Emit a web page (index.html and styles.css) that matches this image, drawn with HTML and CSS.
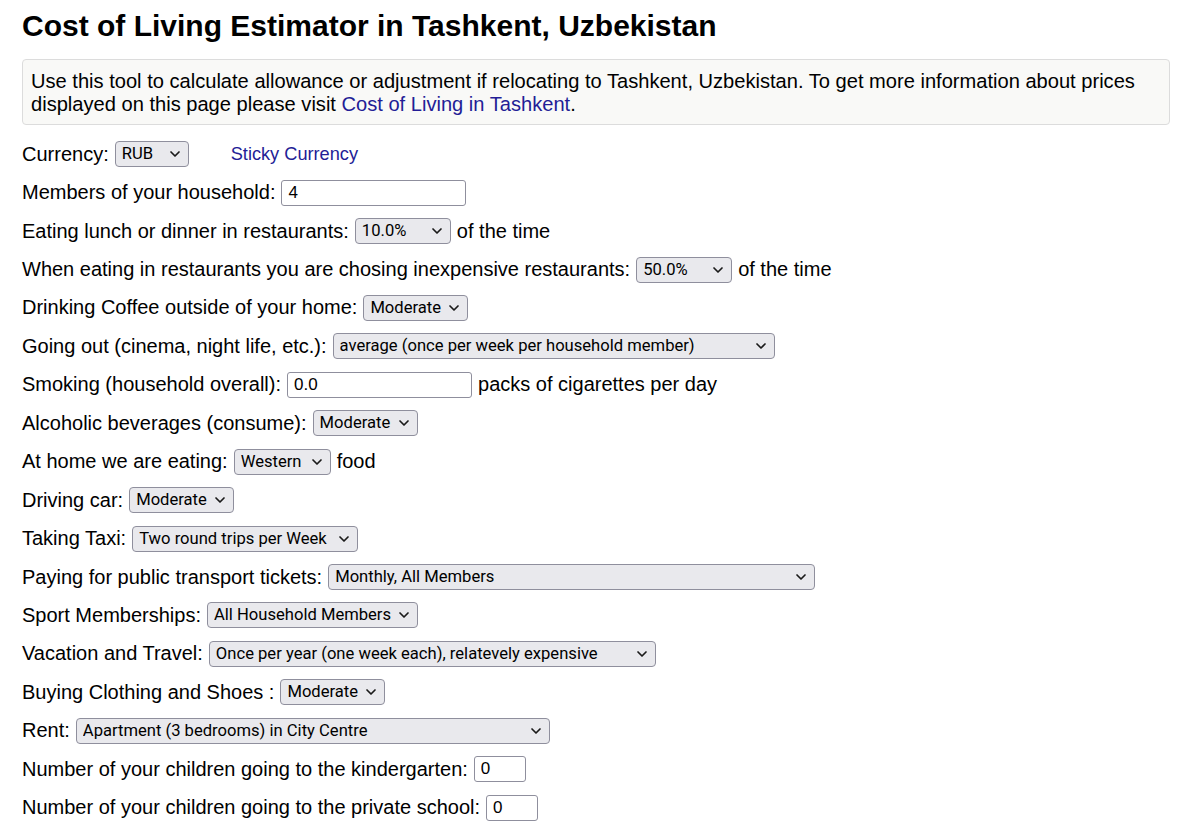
FILE: index.html
```html
<!DOCTYPE html>
<html lang="en">
<head>
<meta charset="utf-8">
<title>Cost of Living Estimator in Tashkent, Uzbekistan</title>
<link rel="stylesheet" href="styles.css">
</head>
<body>
<h1 class="title">Cost of Living Estimator in Tashkent, Uzbekistan</h1>
<div class="info">Use this tool to calculate allowance or adjustment if relocating to Tashkent, Uzbekistan. To get more information about prices displayed on this page please visit <a href="#" class="link">Cost of Living in Tashkent</a>.</div>

<form class="form">
  <div class="row">
    <span>Currency:</span>
    <span class="sel w-currency"><select><option>RUB</option></select><svg class="chev" viewBox="0 0 12 8"><path d="M2 2l4 4 4-4"/></svg></span>
    <a href="#" class="link sticky">Sticky Currency</a>
  </div>
  <div class="row">
    <span>Members of your household:</span>
    <input class="inp w-members" type="text" value="4">
  </div>
  <div class="row">
    <span>Eating lunch or dinner in restaurants:</span>
    <span class="sel w-pct"><select><option>10.0%</option></select><svg class="chev" viewBox="0 0 12 8"><path d="M2 2l4 4 4-4"/></svg></span>
    <span>of the time</span>
  </div>
  <div class="row">
    <span>When eating in restaurants you are chosing inexpensive restaurants:</span>
    <span class="sel w-pct"><select><option>50.0%</option></select><svg class="chev" viewBox="0 0 12 8"><path d="M2 2l4 4 4-4"/></svg></span>
    <span>of the time</span>
  </div>
  <div class="row">
    <span>Drinking Coffee outside of your home:</span>
    <span class="sel w-moderate"><select><option>Moderate</option></select><svg class="chev" viewBox="0 0 12 8"><path d="M2 2l4 4 4-4"/></svg></span>
  </div>
  <div class="row">
    <span>Going out (cinema, night life, etc.):</span>
    <span class="sel w-going"><select><option>average (once per week per household member)</option></select><svg class="chev" viewBox="0 0 12 8"><path d="M2 2l4 4 4-4"/></svg></span>
  </div>
  <div class="row">
    <span>Smoking (household overall):</span>
    <input class="inp w-members" type="text" value="0.0">
    <span>packs of cigarettes per day</span>
  </div>
  <div class="row">
    <span>Alcoholic beverages (consume):</span>
    <span class="sel w-moderate"><select><option>Moderate</option></select><svg class="chev" viewBox="0 0 12 8"><path d="M2 2l4 4 4-4"/></svg></span>
  </div>
  <div class="row">
    <span>At home we are eating:</span>
    <span class="sel w-western"><select><option>Western</option></select><svg class="chev" viewBox="0 0 12 8"><path d="M2 2l4 4 4-4"/></svg></span>
    <span>food</span>
  </div>
  <div class="row">
    <span>Driving car:</span>
    <span class="sel w-moderate"><select><option>Moderate</option></select><svg class="chev" viewBox="0 0 12 8"><path d="M2 2l4 4 4-4"/></svg></span>
  </div>
  <div class="row">
    <span>Taking Taxi:</span>
    <span class="sel w-taxi"><select><option>Two round trips per Week</option></select><svg class="chev" viewBox="0 0 12 8"><path d="M2 2l4 4 4-4"/></svg></span>
  </div>
  <div class="row">
    <span>Paying for public transport tickets:</span>
    <span class="sel w-transport"><select><option>Monthly, All Members</option></select><svg class="chev" viewBox="0 0 12 8"><path d="M2 2l4 4 4-4"/></svg></span>
  </div>
  <div class="row">
    <span>Sport Memberships:</span>
    <span class="sel w-sport"><select><option>All Household Members</option></select><svg class="chev" viewBox="0 0 12 8"><path d="M2 2l4 4 4-4"/></svg></span>
  </div>
  <div class="row">
    <span>Vacation and Travel:</span>
    <span class="sel w-vacation"><select><option>Once per year (one week each), relatevely expensive</option></select><svg class="chev" viewBox="0 0 12 8"><path d="M2 2l4 4 4-4"/></svg></span>
  </div>
  <div class="row">
    <span>Buying Clothing and Shoes :</span>
    <span class="sel w-moderate"><select><option>Moderate</option></select><svg class="chev" viewBox="0 0 12 8"><path d="M2 2l4 4 4-4"/></svg></span>
  </div>
  <div class="row">
    <span>Rent:</span>
    <span class="sel w-rent"><select><option>Apartment (3 bedrooms) in City Centre</option></select><svg class="chev" viewBox="0 0 12 8"><path d="M2 2l4 4 4-4"/></svg></span>
  </div>
  <div class="row">
    <span>Number of your children going to the kindergarten:</span>
    <input class="inp w-small" type="text" value="0">
  </div>
  <div class="row">
    <span>Number of your children going to the private school:</span>
    <input class="inp w-small" type="text" value="0">
  </div>
</form>
</body>
</html>
```

FILE: styles.css
```css
html, body {
  margin: 0;
  padding: 0;
  background: #ffffff;
}

body {
  padding: 8px 30px 0 22px;
  font-family: "Liberation Sans", Arial, sans-serif;
  font-size: 20px;
  color: #000;
}

.title {
  margin: 0 0 16px 0;
  font-size: 30px;
  line-height: 35px;
  font-weight: bold;
}

.info {
  background: #f9f9f7;
  border: 1px solid #dcdcdc;
  border-radius: 4px;
  padding: 10px 12px 9px 8px;
  line-height: 22.5px;
  font-size: 20.1px;
}

.link {
  color: #231d96;
  text-decoration: none;
}

.form {
  margin-top: 10px;
  display: flex;
  flex-direction: column;
}

.row {
  height: 38.44px;
  display: flex;
  align-items: center;
  gap: 6px;
  white-space: nowrap;
}

.sticky {
  margin-left: 36px;
  font-size: 18.2px;
}

.sel {
  position: relative;
  display: inline-block;
  height: 26px;
}

.sel select {
  -webkit-appearance: none;
  appearance: none;
  width: 100%;
  height: 26px;
  box-sizing: border-box;
  margin: 0;
  padding: 0 18px 0 6px;
  border: 1px solid #8f8f9d;
  border-radius: 4px;
  background: #e9e9ed;
  color: #000;
  font-family: Roboto, "Noto Sans", sans-serif;
  font-size: 16.6px;
  line-height: 24px;
}

.chev {
  position: absolute;
  right: 8px;
  top: 9px;
  width: 12px;
  height: 8px;
  fill: none;
  stroke: #1a1a1a;
  stroke-width: 1.7;
  stroke-linecap: round;
  stroke-linejoin: round;
  pointer-events: none;
}

.inp {
  height: 26px;
  box-sizing: border-box;
  margin: 0;
  padding: 0 6px;
  border: 1px solid #8f8f9d;
  border-radius: 3px;
  background: #fff;
  font-family: "Liberation Sans", Arial, sans-serif;
  font-size: 17px;
  color: #000;
}

.w-currency { width: 74px; }
.w-members { width: 185px; }
.w-pct { width: 96px; }
.w-moderate { width: 105px; }
.w-going { width: 442px; }
.w-western { width: 97px; }
.w-taxi { width: 226px; }
.w-transport { width: 487px; }
.w-sport { width: 211px; }
.w-vacation { width: 447px; }
.w-rent { width: 474px; }
.w-small { width: 52px; }
```
